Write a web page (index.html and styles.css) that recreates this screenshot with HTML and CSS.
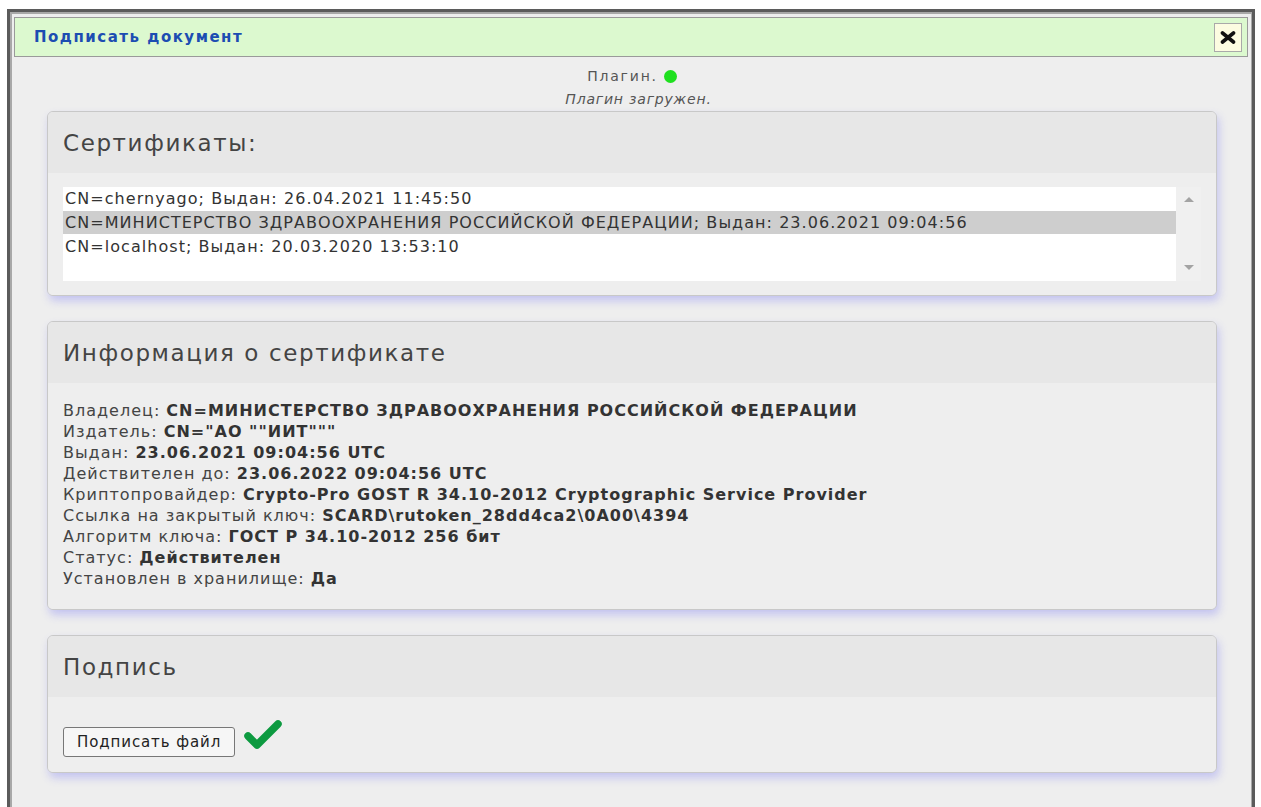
FILE: index.html
```html
<!DOCTYPE html>
<html lang="ru">
<head>
<meta charset="utf-8">
<title>Подписать документ</title>
<link rel="stylesheet" href="styles.css">
</head>
<body>
<div class="dialog">
  <div class="titlebar">
    <span class="title">Подписать документ</span>
    <button class="close" type="button" aria-label="Закрыть">
      <svg width="16" height="13" viewBox="0 0 16 13" aria-hidden="true">
        <path d="M2.5 2 L13.5 11 M13.5 2 L2.5 11" stroke="#111" stroke-width="3.6" stroke-linecap="round"/>
      </svg>
    </button>
  </div>
  <div class="content">
    <div class="plugin">
      <div class="plugin-line">Плагин. <span class="dot"></span></div>
      <div class="plugin-state">Плагин загружен.</div>
    </div>

    <section class="panel">
      <div class="panel-head">Сертификаты:</div>
      <div class="panel-body list-body">
        <div class="listbox">
          <div class="options">
            <div class="option">CN=chernyago; Выдан: 26.04.2021 11:45:50</div>
            <div class="option selected">CN=МИНИСТЕРСТВО ЗДРАВООХРАНЕНИЯ РОССИЙСКОЙ ФЕДЕРАЦИИ; Выдан: 23.06.2021 09:04:56</div>
            <div class="option">CN=localhost; Выдан: 20.03.2020 13:53:10</div>
          </div>
          <div class="scrollbar">
            <span class="arrow up"></span>
            <span class="arrow down"></span>
          </div>
        </div>
      </div>
    </section>

    <section class="panel">
      <div class="panel-head">Информация о сертификате</div>
      <div class="panel-body info-body">
        <div>Владелец: <b>CN=МИНИСТЕРСТВО ЗДРАВООХРАНЕНИЯ РОССИЙСКОЙ ФЕДЕРАЦИИ</b></div>
        <div>Издатель: <b>CN="АО ""ИИТ"""</b></div>
        <div>Выдан: <b>23.06.2021 09:04:56 UTC</b></div>
        <div>Действителен до: <b>23.06.2022 09:04:56 UTC</b></div>
        <div>Криптопровайдер: <b>Crypto-Pro GOST R 34.10-2012 Cryptographic Service Provider</b></div>
        <div>Ссылка на закрытый ключ: <b>SCARD\rutoken_28dd4ca2\0A00\4394</b></div>
        <div>Алгоритм ключа: <b>ГОСТ Р 34.10-2012 256 бит</b></div>
        <div>Статус: <b>Действителен</b></div>
        <div>Установлен в хранилище: <b>Да</b></div>
      </div>
    </section>

    <section class="panel">
      <div class="panel-head">Подпись</div>
      <div class="panel-body sign-body">
        <button class="sign-btn" type="button">Подписать файл</button>
        <svg class="check" width="40" height="34" viewBox="0 0 40 34" aria-hidden="true">
          <path d="M5 19 L14 28 L35 7" fill="none" stroke="#0d9a40" stroke-width="7.5" stroke-linecap="round" stroke-linejoin="round"/>
        </svg>
      </div>
    </section>
  </div>
</div>
</body>
</html>
```

FILE: styles.css
```css
html, body {
  margin: 0;
  height: 100%;
  background: #ffffff;
  overflow: hidden;
}

body {
  font-family: "DejaVu Sans", Verdana, sans-serif;
  color: #333;
}

.dialog {
  margin: 9px 6px 0 7px;
  height: calc(100% - 9px);
  box-sizing: border-box;
  border: 3px solid #5b5b5b;
  border-bottom: none;
  box-shadow: inset 2px 2px 0 #a8a8a8, inset -1px 0 0 #a8a8a8;
  background: #eeeeee;
  padding: 5px 4px 0 4px;
}

.titlebar {
  display: flex;
  align-items: center;
  justify-content: space-between;
  height: 38px;
  padding: 0 5px 0 19px;
  background: #dcf9cf;
  border: 1px solid #9a9a9a;
}

.title {
  font-size: 15px;
  font-weight: bold;
  letter-spacing: 1.5px;
  color: #1c4db2;
}

.close {
  display: flex;
  align-items: center;
  justify-content: center;
  width: 28px;
  height: 29px;
  padding: 0;
  border: 1px solid #a9a9a9;
  background: #fcfce1;
}

.content {
  padding: 0 31px 0 33px;
}

.plugin {
  text-align: center;
  font-size: 14px;
  color: #555;
  padding: 7px 0 0 0;
}

.plugin-line {
  display: flex;
  justify-content: center;
  align-items: center;
  gap: 6px;
  height: 24px;
  letter-spacing: 1.8px;
}

.dot {
  display: inline-block;
  width: 13px;
  height: 13px;
  border-radius: 50%;
  background: #1fe01f;
}

.plugin-state {
  font-style: italic;
  line-height: 23px;
  padding-left: 13px;
  letter-spacing: 0.8px;
}

.panel {
  border: 1px solid #c8c8c8;
  border-radius: 6px;
  background: #eeeeee;
  box-shadow: 2px 5px 9px rgba(110, 110, 245, 0.32);
  overflow: hidden;
  margin-bottom: 25px;
}

.panel-head {
  height: 61px;
  line-height: 62px;
  padding-left: 15px;
  background: #e7e7e7;
  font-size: 23px;
  letter-spacing: 1.6px;
  color: #444;
}

.panel-body {
  background: #eeeeee;
}

.list-body {
  padding: 14px 15px 14px 15px;
}

.listbox {
  display: flex;
  height: 94px;
  background: #ffffff;
}

.options {
  flex: 1;
  font-size: 16px;
  letter-spacing: 1.05px;
  color: #333;
}

.option {
  height: 23px;
  line-height: 23px;
  padding-left: 2px;
  white-space: nowrap;
}

.option.selected {
  background: #cecece;
  margin: 1px 0;
}

.scrollbar {
  width: 25px;
  background: #f0f0f0;
  display: flex;
  flex-direction: column;
  justify-content: space-between;
  align-items: center;
  padding: 10px 0 11px 0;
}

.arrow {
  width: 0;
  height: 0;
  border-left: 5px solid transparent;
  border-right: 5px solid transparent;
}

.arrow.up {
  border-bottom: 5px solid #a3a3a3;
}

.arrow.down {
  border-top: 5px solid #a3a3a3;
}

.info-body {
  padding: 17px 15px 20px 15px;
  font-size: 16px;
  line-height: 21px;
  letter-spacing: 1px;
  color: #444;
}

.info-body b {
  color: #333;
}

.sign-body {
  display: flex;
  align-items: flex-end;
  gap: 8px;
  padding: 20px 15px 15px 15px;
}

.sign-btn {
  height: 30px;
  padding: 0 13px;
  font-family: "DejaVu Sans", sans-serif;
  font-size: 15px;
  letter-spacing: 0.9px;
  color: #222;
  background: #f6f6f6;
  border: 1px solid #777;
  border-radius: 3px;
}

.check {
  display: block;
  margin-bottom: 6px;
}
```
